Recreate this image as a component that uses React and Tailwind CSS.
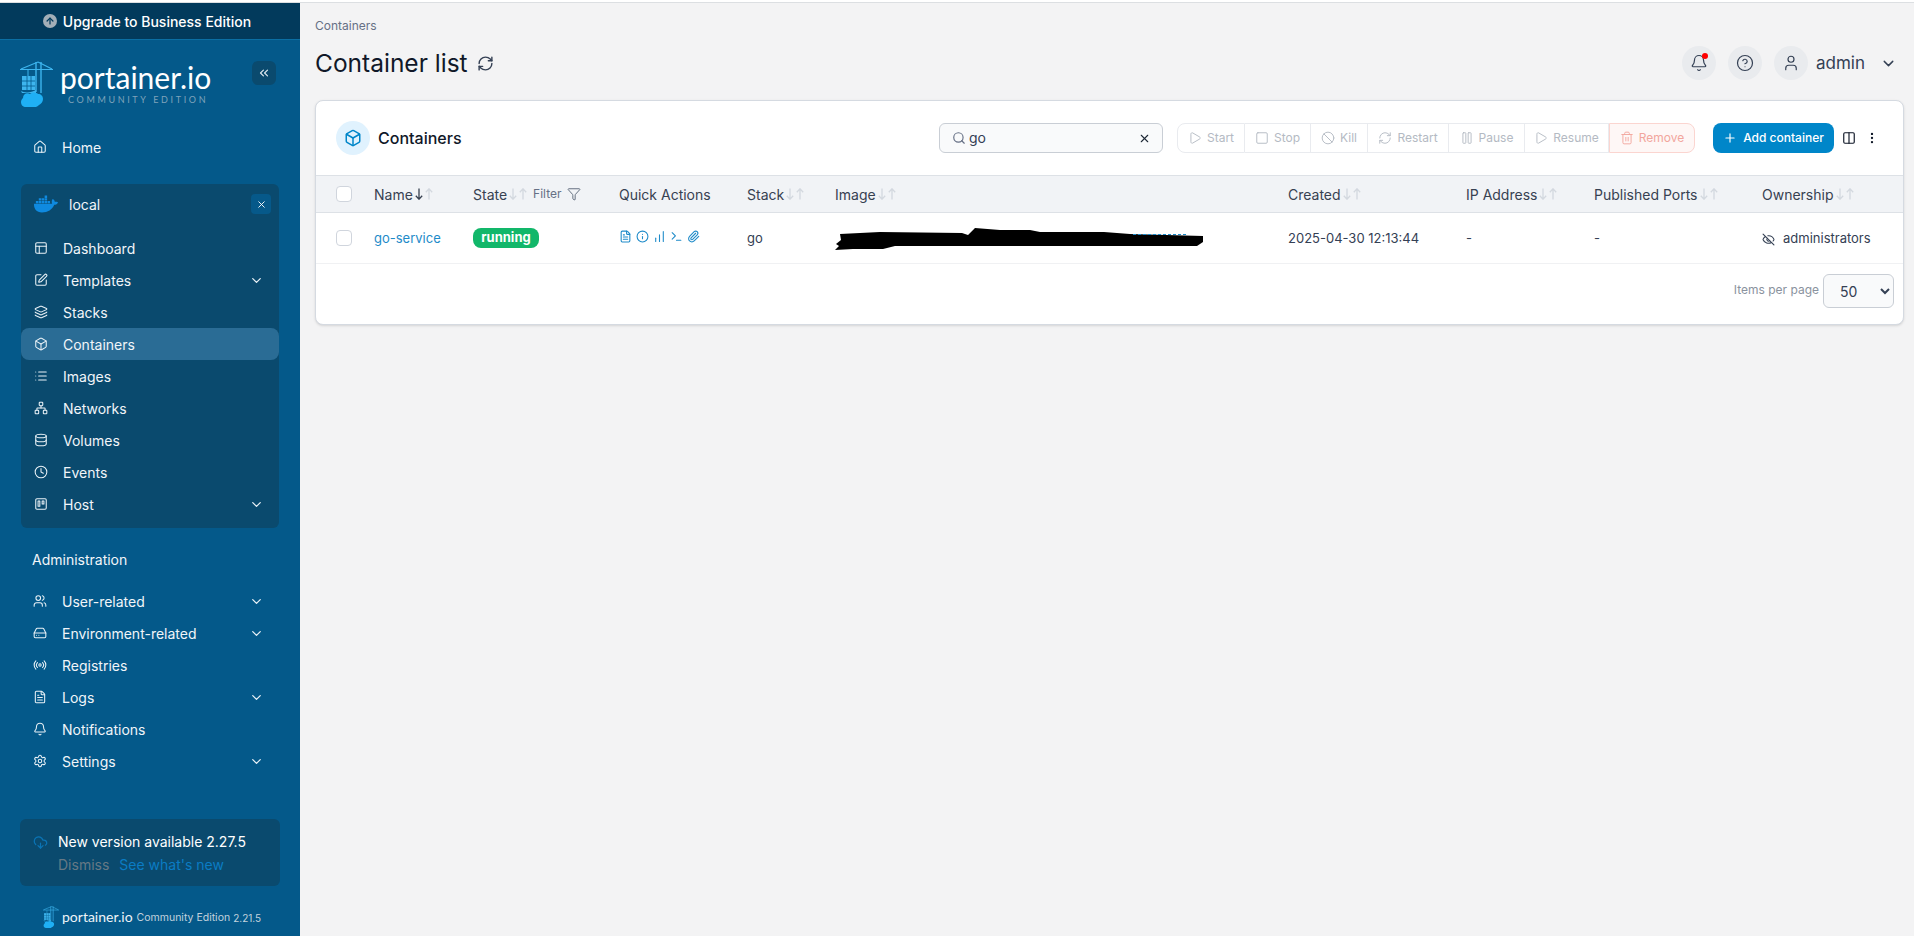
import {
  House, PanelsTopLeft, SquarePen, Layers, Box, List, Network, Database, Clock, Trello, Users, HardDrive,
  Radio, FileText, Bell, Settings, ChevronDown, ChevronsLeft, X, CloudDownload, RefreshCw, Search, Play,
  Square, Ban, Pause, Trash2, Plus, Columns2, EllipsisVertical, CircleHelp, User, Filter, Info,
  ChartNoAxesColumnIncreasing, Terminal, Paperclip, EyeOff, ArrowUp,
} from 'lucide-react';
import { FaDocker } from 'react-icons/fa';

const ENV_ITEMS = [
  { label: 'Dashboard', icon: PanelsTopLeft },
  { label: 'Templates', icon: SquarePen, more: true },
  { label: 'Stacks', icon: Layers },
  { label: 'Containers', icon: Box, active: true },
  { label: 'Images', icon: List },
  { label: 'Networks', icon: Network },
  { label: 'Volumes', icon: Database },
  { label: 'Events', icon: Clock },
  { label: 'Host', icon: Trello, more: true },
];

const ADMIN_ITEMS = [
  { label: 'User-related', icon: Users, more: true },
  { label: 'Environment-related', icon: HardDrive, more: true },
  { label: 'Registries', icon: Radio },
  { label: 'Logs', icon: FileText, more: true },
  { label: 'Notifications', icon: Bell },
  { label: 'Settings', icon: Settings, more: true },
];

const ACTIONS = [
  { label: 'Start', icon: Play, width: 'w-[68px]' },
  { label: 'Stop', icon: Square, width: 'w-[66px]' },
  { label: 'Kill', icon: Ban, width: 'w-[57px]' },
  { label: 'Restart', icon: RefreshCw, width: 'w-[81px]' },
  { label: 'Pause', icon: Pause, width: 'w-[76px]' },
  { label: 'Resume', icon: Play, width: 'w-[84px]' },
];

const COLS = 'grid grid-cols-[58px_99px_146px_128px_88px_453px_178px_128px_168px_1fr] items-center';

function PortainerMark({ className }) {
  // crane over a stack of containers and a cloud
  return (
    <svg viewBox="0 0 33 46" className={className} fill="none">
      <path d="M0 8.5h33M18 1L1 8M18 1l14 7" stroke="#3db5ee" strokeWidth="1.2" />
      <path d="M16 1v30M21 1v31" stroke="#3db5ee" strokeWidth="1.4" />
      <path d="M8 9v7" stroke="#3db5ee" strokeWidth="1" />
      <path d="M2 15h13v14H2z" fill="#3db5ee" />
      <path d="M2 20h13M2 25h13M7 15v14M11 15v14" stroke="#04598a" strokeWidth="0.8" />
      <path d="M1 30c3 2 10 2 15-1v3H2z" fill="#3db5ee" />
      <path d="M6 46c-3 0-5-2-5-5 0-2 1-3 2-4 0-4 4-6 7-4 2-2 6-2 8 0 3 0 5 2 5 5s-2 5-4 6c-2 2-5 3-7 2-2 0-4 0-6 0z" fill="#1fb0f5" />
    </svg>
  );
}

function NavRow({ item, inset }) {
  const Icon = item.icon;
  return (
    <div
      className={`flex h-8 items-center rounded-lg text-sm text-[#f1f5f9] ${inset ? 'pl-[13px]' : 'pl-3'} pr-[15px] ${
        item.active ? 'bg-[#2a6c95]' : ''
      }`}
    >
      <Icon size={14} strokeWidth={1.8} className="shrink-0 text-[#eaf2f7]" />
      <span className="ml-[15px] mt-[2px]">{item.label}</span>
      {item.more && <ChevronDown size={15} strokeWidth={2} className="ml-auto text-[#eaf2f7]" />}
    </div>
  );
}

function Sidebar() {
  return (
    <aside className="flex w-[300px] shrink-0 flex-col bg-[#04598a]">
      <div className="flex h-[37px] items-center justify-center gap-[6px] border-b border-[#0b6ea3] bg-[#023a5c] pr-[6px] text-sm font-medium text-white">
        <span className="flex h-[14px] w-[14px] items-center justify-center rounded-full bg-[#a3aeb8]">
          <ArrowUp size={10} strokeWidth={3} className="text-[#023a5c]" />
        </span>
        <span className="mt-[2px]">Upgrade to Business Edition</span>
      </div>

      <div className="flex h-[91px] pl-5 pr-6 pt-[21px]">
        <PortainerMark className="h-[46px] w-[33px] shrink-0" />
        <div className="ml-[7px] flex flex-col">
          <span className="font-['Lato',sans-serif] text-[30px] leading-[32px] text-white">portainer.io</span>
          <span className="ml-2 mt-[1px] font-['Lato',sans-serif] text-[9px] leading-[12px] tracking-[2.65px] text-[#7fa3ba]">COMMUNITY EDITION</span>
        </div>
        <button className="ml-auto flex h-6 w-6 shrink-0 items-center justify-center rounded-md bg-[#0a4a6e] text-[#dfe9ef]">
          <ChevronsLeft size={14} />
        </button>
      </div>

      <div className="px-[21px]">
        <NavRow item={{ label: 'Home', icon: House }} />
      </div>

      <div className="mx-[21px] mt-[21px] rounded-md bg-[#0a4a6e] pb-2">
        <div className="mb-2 flex h-10 items-center pl-[13px] pr-[8px]">
          <FaDocker size={24} className="text-[#0f8ae0]" />
          <span className="ml-[11px] mt-[2px] text-sm text-[#f1f5f9]">local</span>
          <button className="ml-auto flex h-5 w-5 items-center justify-center rounded bg-[#06598a] text-white">
            <X size={11} />
          </button>
        </div>
        {ENV_ITEMS.map((item) => (
          <NavRow key={item.label} item={item} inset />
        ))}
      </div>

      <div className="ml-8 mt-[22px] h-5 text-sm leading-5 text-[#f1f5f9]">Administration</div>

      <div className="mt-[15px] px-[21px]">
        {ADMIN_ITEMS.map((item) => (
          <NavRow key={item.label} item={item} />
        ))}
      </div>

      <div className="mx-5 mt-[42px] h-[67px] rounded-md bg-[#0a4a6e] pl-[13px] pt-[13px]">
        <div className="flex h-5 items-center text-sm text-white">
          <CloudDownload size={15} className="text-[#0b74b5]" />
          <span className="ml-[10px]">New version available 2.27.5</span>
        </div>
        <div className="ml-[25px] mt-[3px] flex gap-[10px] text-sm text-[#667985]">
          <span>Dismiss</span>
          <span className="text-[#0a7cc4]">See what's new</span>
        </div>
      </div>

      <div className="mt-[19px] flex items-center pl-[43px]">
        <PortainerMark className="h-[22px] w-[16px]" />
        <span className="ml-[3px] font-['Lato',sans-serif] text-[14px] leading-[22px] text-[#eef4f8]">portainer.io</span>
        <span className="ml-[4px] mt-[2px] text-[10.5px] leading-[22px] text-[#c2d2dd]">Community Edition</span>
        <span className="ml-[3px] mt-[2px] text-[10px] leading-[22px] text-[#c2d2dd]">2.21.5</span>
      </div>
    </aside>
  );
}

function SortArrows({ active }) {
  return (
    <span className="ml-[2px] inline-flex items-center gap-[2px]">
      <svg width="8" height="12" viewBox="0 0 8 12" fill="none" strokeWidth="1.3" className={active ? 'text-[#374151]' : 'text-[#d3d8df]'}>
        <path d="M4 0.5v10.5M0.8 7.8L4 11.2L7.2 7.8" stroke="currentColor" />
      </svg>
      <svg width="8" height="12" viewBox="0 0 8 12" fill="none" strokeWidth="1.3" className="text-[#d3d8df]">
        <path d="M4 11.5V1M0.8 4.2L4 0.8L7.2 4.2" stroke="currentColor" />
      </svg>
    </span>
  );
}

function Th({ label, active, children }) {
  return (
    <div className="flex items-center text-sm text-[#374151]">
      <span className="mt-[2px]">{label}</span>
      <SortArrows active={active} />
      {children}
    </div>
  );
}

function RoundIcon({ children }) {
  return (
    <span className="relative flex h-[34px] w-[34px] items-center justify-center rounded-full bg-[#e9ebee] text-[#344054]">
      {children}
    </span>
  );
}

function Scribble() {
  // hand-drawn redaction over the image name
  return (
    <svg width="372" height="30" viewBox="0 0 372 30" className="-ml-[2px] block">
      <path
        d="M2 26L6 22L3 20L8 16L7 10L47 8L129 9L135 11L142 4L167 6L197 6L207 8L271 8L297 10L370 12L370 18L364 22L62 22L50 25L20 25Z"
        fill="#000"
      />
      <path d="M300 10.5h55" stroke="#1e8bc9" strokeWidth="1" strokeDasharray="3 2" />
    </svg>
  );
}

function ContainersCard() {
  return (
    <div className="mt-5 rounded-lg border border-[#d5dae1] bg-white shadow-sm">
      <div className="flex h-[74px] items-center pl-5 pr-6">
        <span className="flex h-[34px] w-[34px] items-center justify-center rounded-full bg-[#e0f2fe] text-[#0086c9]">
          <Box size={18} />
        </span>
        <span className="ml-2 text-base font-medium text-[#101828]">Containers</span>

        <div className="ml-auto flex h-[30px] w-[224px] items-center rounded-md border border-[#c9ced5] bg-[#f9fafb] pl-3 pr-[11px]">
          <Search size={14} className="text-[#667085]" />
          <span className="ml-[3px] text-sm text-[#344054]">go</span>
          <X size={13} className="ml-auto text-[#1f2937]" />
        </div>

        <div className="ml-[14px] flex h-[30px]">
          {ACTIONS.map((a, i) => {
            const Icon = a.icon;
            return (
              <div
                key={a.label}
                className={`flex items-center justify-center gap-[5px] border border-[#e9ebef] text-xs text-[#b4bac3] ${a.width} ${
                  i === 0 ? 'rounded-l-lg' : 'border-l-0'
                }`}
              >
                <Icon size={14} strokeWidth={1.6} />
                {a.label}
              </div>
            );
          })}
          <div className="flex w-[86px] items-center justify-center gap-[5px] rounded-r-lg border border-[#fbd5d0] bg-[#fef7f6] text-xs text-[#f2a69d]">
            <Trash2 size={14} strokeWidth={1.6} />
            Remove
          </div>
        </div>

        <button className="ml-[18px] flex h-[30px] w-[121px] items-center justify-center gap-[6px] rounded-lg bg-[#0086c9] text-xs font-medium text-white">
          <Plus size={14} />
          Add container
        </button>
        <Columns2 size={14} className="ml-[8px] text-[#101828]" />
        <EllipsisVertical size={14} className="ml-[9px] text-[#101828]" />
      </div>

      <div className={`${COLS} h-[38px] border-y border-[#dde1e6] bg-[#f1f3f6]`}>
        <input type="checkbox" className="ml-5 h-4 w-4 appearance-none rounded border border-[#d0d5dd] bg-white" />
        <Th label="Name" active />
        <Th label="State">
          <span className="ml-[6px] text-xs text-[#667085]">Filter</span>
          <Filter size={14} strokeWidth={1.4} className="ml-[5px] text-[#475467]" />
        </Th>
        <div className="mt-[2px] text-sm text-[#374151]">Quick Actions</div>
        <Th label="Stack" />
        <Th label="Image" />
        <Th label="Created" />
        <Th label="IP Address" />
        <Th label="Published Ports" />
        <Th label="Ownership" />
      </div>

      <div className={`${COLS} h-[51px] border-b border-[#f0f1f3] pt-[2px] text-[13px] text-[#344054]`}>
        <input type="checkbox" className="ml-5 mb-[2px] h-4 w-4 appearance-none rounded border border-[#d0d5dd] bg-white" />
        <span className="text-[#1e8bc9]">go-service</span>
        <span className="mb-[2px] flex h-5 w-[66px] items-center justify-center rounded-lg bg-[#12b76a] text-[13px] font-bold text-white">running</span>
        <div className="mt-[-6px] flex items-center gap-[4px] text-[#1e8bc9]">
          <FileText size={13} />
          <Info size={13} />
          <ChartNoAxesColumnIncreasing size={13} />
          <Terminal size={13} />
          <Paperclip size={13} />
        </div>
        <span>go</span>
        <Scribble />
        <span>2025-04-30 12:13:44</span>
        <span>-</span>
        <span>-</span>
        <span className="flex items-center">
          <EyeOff size={13} className="mr-[8px] text-[#344054]" />
          administrators
        </span>
      </div>

      <div className="flex h-[60px] items-start justify-end pr-[9px] pt-[10px]">
        <span className="mr-[4px] mt-[8px] text-xs text-[#8a929e]">Items per page</span>
        <select defaultValue="50" className="h-[34px] w-[71px] rounded-md border border-[#c9ced5] bg-[#f9fafb] pl-3 text-sm text-[#344054]">
          <option value="10">10</option>
          <option value="25">25</option>
          <option value="50">50</option>
          <option value="100">100</option>
        </select>
      </div>
    </div>
  );
}

export default function App() {
  return (
    <div className="flex h-screen flex-col overflow-hidden bg-[#f3f3f4] font-['Inter',sans-serif]">
      <div className="h-[3px] shrink-0 border-b border-[#dcdfe2] bg-white" />
      <div className="flex min-h-0 flex-1">
        <Sidebar />
        <main className="min-w-0 flex-1 pl-[15px] pr-[10px] pt-[14px]">
          <div className="mt-px h-4 text-xs leading-4 text-[#667085]">Containers</div>
          <div className="mt-3 flex h-[34px] items-center">
            <h1 className="text-[24.5px] text-[#101828]">Container list</h1>
            <RefreshCw size={17} className="ml-[9px] text-[#344054]" />
            <div className="ml-auto flex items-center">
              <RoundIcon>
                <Bell size={18} strokeWidth={1.6} />
                <span className="absolute right-[8px] top-[7px] h-[6px] w-[6px] rounded-full bg-[#ff0000]" />
              </RoundIcon>
              <span className="ml-3">
                <RoundIcon>
                  <CircleHelp size={18} strokeWidth={1.6} />
                </RoundIcon>
              </span>
              <span className="ml-3">
                <RoundIcon>
                  <User size={18} strokeWidth={1.6} />
                </RoundIcon>
              </span>
              <span className="ml-2 mt-[2px] text-[17px] text-[#344054]">admin</span>
              <ChevronDown size={17} className="ml-[15px] mr-[7px] text-[#344054]" />
            </div>
          </div>
          <ContainersCard />
        </main>
      </div>
    </div>
  );
}
